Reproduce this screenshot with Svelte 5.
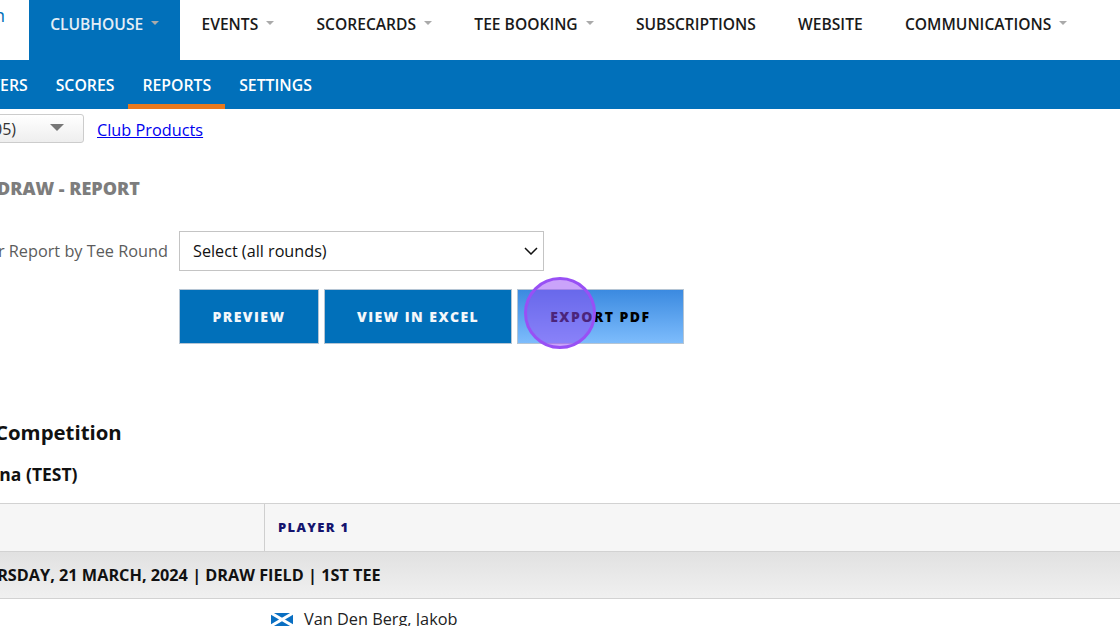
<script>
  const mainNav = [
    { label: 'CLUBHOUSE', caret: true, active: true },
    { label: 'EVENTS', caret: true },
    { label: 'SCORECARDS', caret: true },
    { label: 'TEE BOOKING', caret: true },
    { label: 'SUBSCRIPTIONS' },
    { label: 'WEBSITE' },
    { label: 'COMMUNICATIONS', caret: true }
  ];
  const subNav = [
    { label: 'PLAYERS' },
    { label: 'SCORES' },
    { label: 'REPORTS', active: true },
    { label: 'SETTINGS' }
  ];
</script>

<div class="page">
  <header class="topbar">
    <span class="logo">n</span>
    <nav class="main-nav">
      {#each mainNav as item}
        <a class="main-link" class:active={item.active} href="#top">
          {item.label}
          {#if item.caret}<i class="caret"></i>{/if}
        </a>
      {/each}
    </nav>
  </header>

  <nav class="sub-nav">
    {#each subNav as item}
      <a class="sub-link" class:active={item.active} href="#top">{item.label}</a>
    {/each}
  </nav>

  <div class="tools">
    <div class="club-select">
      <span>(2005)</span>
      <i class="club-caret"></i>
    </div>
    <a class="products" href="#top">Club Products</a>
  </div>

  <h2 class="report-title">DRAW - REPORT</h2>

  <div class="filter">
    <span class="filter-label">Filter Report by Tee Round</span>
    <div class="round-select">
      <span>Select (all rounds)</span>
      <svg width="14" height="8" viewBox="0 0 14 8">
        <path d="M1 1 L7 7 L13 1" fill="none" stroke="#111" stroke-width="1.5" />
      </svg>
    </div>
  </div>

  <div class="actions">
    <button class="btn">PREVIEW</button>
    <button class="btn">VIEW IN EXCEL</button>
    <button class="btn hover">EXPORT PDF</button>
  </div>

  <h2 class="competition">Competition</h2>
  <h3 class="venue">Arena (TEST)</h3>

  <div class="draw">
    <div class="draw-head">
      <div class="tee-col"></div>
      <div class="player-col">PLAYER 1</div>
    </div>
    <div class="draw-group">THURSDAY, 21 MARCH, 2024 | DRAW FIELD | 1ST TEE</div>
    <div class="draw-row">
      <svg class="flag" width="22" height="13" viewBox="0 0 22 13">
        <rect width="22" height="13" fill="#0a6fc2" />
        <path d="M0 0 L22 13 M22 0 L0 13" stroke="#fff" stroke-width="3" />
      </svg>
      <span>Van Den Berg, Jakob</span>
    </div>
  </div>

  <div class="click-ring"></div>
</div>

<style>
  :global(body) {
    margin: 0;
    background: #fff;
  }
  .page {
    position: relative;
    width: 1120px;
    height: 626px;
    overflow: hidden;
    font-family: 'Open Sans', 'Liberation Sans', sans-serif;
    color: #111;
    background: #fff;
  }
  .topbar {
    display: flex;
    height: 60px;
  }
  .logo {
    flex: none;
    box-sizing: border-box;
    width: 29px;
    margin: 0 6px 0 -6px;
    padding-top: 3px;
    font-size: 18px;
    color: #0170ba;
  }
  .main-nav {
    display: flex;
  }
  .main-link {
    display: flex;
    align-items: flex-start;
    padding: 13px 21.15px 0;
    font-size: 15.6px;
    font-weight: 600;
    line-height: 22px;
    color: #1a1a1a;
    text-decoration: none;
    white-space: nowrap;
  }
  .main-link.active {
    background: #0170ba;
    color: #e4eef6;
  }
  .caret {
    width: 0;
    height: 0;
    margin: 8px 0 0 8px;
    border-left: 4.5px solid transparent;
    border-right: 4.5px solid transparent;
    border-top: 4.5px solid #aaa;
  }
  .sub-nav {
    display: flex;
    height: 49px;
    margin-left: -52px;
    background: #0170ba;
  }
  .sub-link {
    box-sizing: border-box;
    height: 49px;
    padding: 14px 14px 0;
    font-size: 15.8px;
    font-weight: 600;
    line-height: 22px;
    color: #fff;
    text-decoration: none;
    white-space: nowrap;
  }
  .sub-link.active {
    border-bottom: 5px solid #e8791d;
  }
  .tools {
    display: flex;
    align-items: center;
    height: 29px;
    margin-top: 5px;
  }
  .club-select {
    display: flex;
    align-items: center;
    justify-content: space-between;
    box-sizing: border-box;
    width: 124px;
    height: 29px;
    margin-left: -40px;
    padding: 0 19px 0 9px;
    border: 1px solid #ccc;
    border-radius: 3px;
    background: linear-gradient(#fff, #eee);
    font-size: 16px;
    color: #333;
  }
  .club-caret {
    width: 0;
    height: 0;
    margin-top: -3px;
    border-left: 7px solid transparent;
    border-right: 7px solid transparent;
    border-top: 7px solid #777;
  }
  .products {
    margin: 2px 0 0 13px;
    font-size: 16.3px;
    color: #0000ee;
  }
  .report-title {
    margin: 33px 0 0 -3px;
    font-size: 18px;
    font-weight: 800;
    line-height: 24px;
    color: #7d7d7d;
    white-space: nowrap;
  }
  .filter {
    display: flex;
    align-items: center;
    height: 40px;
    margin-top: 31px;
  }
  .filter-label {
    display: flex;
    flex: none;
    justify-content: flex-end;
    width: 168px;
    margin-right: 11px;
    overflow: hidden;
    font-size: 16.3px;
    color: #5c5c5c;
    white-space: nowrap;
  }
  .round-select {
    display: flex;
    align-items: center;
    justify-content: space-between;
    box-sizing: border-box;
    width: 365px;
    height: 40px;
    padding: 0 5px 0 13px;
    border: 1px solid #c4c4c4;
    font-size: 16.2px;
  }
  .actions {
    display: flex;
    gap: 5px;
    margin: 18px 0 0 179px;
  }
  .btn {
    height: 55px;
    padding: 0 32px;
    border: 1px solid #b5c5d4;
    background: #0170ba;
    color: #f4f7fa;
    font-family: inherit;
    font-size: 14px;
    font-weight: 800;
    letter-spacing: 1.45px;
  }
  .btn:first-child {
    min-width: 140px;
  }
  .btn.hover {
    background: linear-gradient(#3b8ae0, #7dbcfc);
    color: #000;
  }
  .competition {
    margin: 73px 0 0 -5px;
    font-size: 20.4px;
    font-weight: 700;
    line-height: 30px;
    white-space: nowrap;
  }
  .venue {
    margin: 15px 0 0 -31px;
    font-size: 17.5px;
    font-weight: 700;
    line-height: 24px;
    white-space: nowrap;
  }
  .draw {
    margin-top: 17px;
  }
  .draw-head {
    display: flex;
    height: 47px;
    border-top: 1px solid #d2d2d2;
    background: #f6f6f6;
  }
  .tee-col {
    width: 264px;
    border-right: 1px solid #cfcfcf;
  }
  .player-col {
    align-self: center;
    padding: 0 0 2px 13px;
    font-size: 13px;
    font-weight: 800;
    letter-spacing: 1.35px;
    color: #14146e;
  }
  .draw-group {
    box-sizing: border-box;
    height: 48px;
    margin-left: -37px;
    border-top: 1px solid #d2d2d2;
    border-bottom: 1px solid #d2d2d2;
    background: linear-gradient(#e1e1e1, #f0f0f0);
    font-size: 16.25px;
    font-weight: 700;
    line-height: 46px;
    white-space: nowrap;
  }
  .draw-row {
    display: flex;
    align-items: center;
    gap: 11px;
    margin: 8px 0 0 271px;
    font-size: 16.3px;
    line-height: 24px;
    color: #222;
    white-space: nowrap;
  }
  .flag {
    flex: none;
  }
  .click-ring {
    position: absolute;
    left: 524px;
    top: 277px;
    box-sizing: border-box;
    width: 72px;
    height: 72px;
    border: 3px solid #9850f5;
    border-radius: 50%;
    background: rgba(150, 72, 246, 0.5);
  }
</style>
